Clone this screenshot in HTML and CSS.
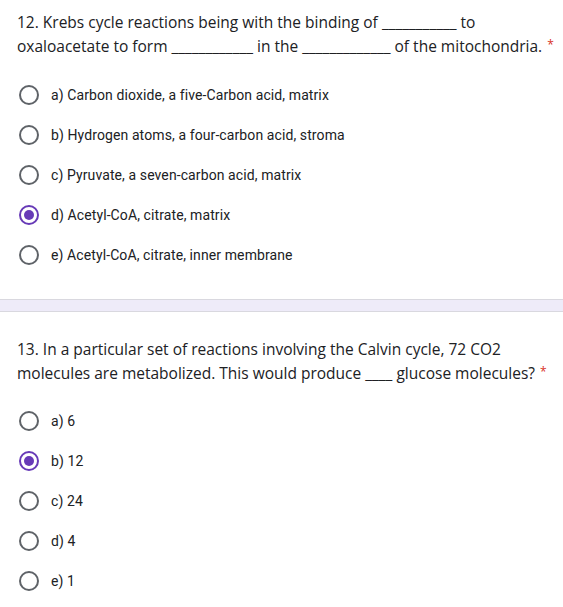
FILE: index.html
```html
<!DOCTYPE html>
<html>
<head>
<meta charset="utf-8">
<link rel="stylesheet" href="styles.css">
</head>
<body>
<section class="question q12">
  <div class="title">12. Krebs cycle reactions being with the binding of <span class="blank">___________</span> to<br>oxaloacetate to form <span class="blank">____________</span> in the <span class="blank">_____________</span> of the mitochondria.<span class="req">*</span></div>
  <div class="options">
    <label class="opt"><span class="radio"></span><span class="lbl">a) Carbon dioxide, a five-Carbon acid, matrix</span></label>
    <label class="opt"><span class="radio"></span><span class="lbl">b) Hydrogen atoms, a four-carbon acid, stroma</span></label>
    <label class="opt"><span class="radio"></span><span class="lbl">c) Pyruvate, a seven-carbon acid, matrix</span></label>
    <label class="opt"><span class="radio checked"></span><span class="lbl">d) Acetyl-CoA, citrate, matrix</span></label>
    <label class="opt"><span class="radio"></span><span class="lbl">e) Acetyl-CoA, citrate, inner membrane</span></label>
  </div>
</section>
<div class="band"></div>
<section class="question q13">
  <div class="title">13. In a particular set of reactions involving the Calvin cycle, 72 CO2<br>molecules are metabolized. This would produce <span class="blank">____</span> glucose molecules?<span class="req">*</span></div>
  <div class="options">
    <label class="opt"><span class="radio"></span><span class="lbl">a) 6</span></label>
    <label class="opt"><span class="radio checked"></span><span class="lbl">b) 12</span></label>
    <label class="opt"><span class="radio"></span><span class="lbl">c) 24</span></label>
    <label class="opt"><span class="radio"></span><span class="lbl">d) 4</span></label>
    <label class="opt"><span class="radio"></span><span class="lbl">e) 1</span></label>
  </div>
</section>
</body>
</html>
```
FILE: styles.css
```css
html, body {
  margin: 0;
  padding: 0;
  background: #ffffff;
}
body {
  width: 563px;
  height: 607px;
  overflow: hidden;
}
.question {
  padding-left: 17px;
}
.q12 {
  padding-top: 10px;
  padding-bottom: 24px;
}
.q13 {
  padding-top: 25px;
}
.title {
  font-family: "Open Sans", "Noto Sans", sans-serif;
  font-size: 15.5px;
  line-height: 24px;
  color: #202124;
  white-space: nowrap;
}
.req {
  color: #d93025;
  font-size: 12px;
  line-height: 0;
  vertical-align: 3px;
  margin-left: 5px;
}
.options {
  display: flex;
  flex-direction: column;
  margin-top: 17px;
}
.q13 .options {
  margin-top: 16px;
}
.opt {
  display: flex;
  align-items: center;
  height: 40px;
}
.radio {
  box-sizing: border-box;
  width: 20px;
  height: 20px;
  border: 2px solid #5f6368;
  border-radius: 50%;
  margin-left: 2px;
  display: flex;
  align-items: center;
  justify-content: center;
  flex-shrink: 0;
}
.radio.checked {
  border-color: #673ab7;
}
.radio.checked::after {
  content: "";
  width: 10px;
  height: 10px;
  border-radius: 50%;
  background: #673ab7;
}
.lbl {
  margin-left: 12px;
  font-family: Roboto, "Liberation Sans", sans-serif;
  font-size: 14px;
  color: #202124;
  letter-spacing: 0.1px;
}
.band {
  height: 11px;
  background: #eeebf9;
  border-top: 1px solid #d9d8df;
  border-bottom: 1px solid #d9d8df;
}
```
